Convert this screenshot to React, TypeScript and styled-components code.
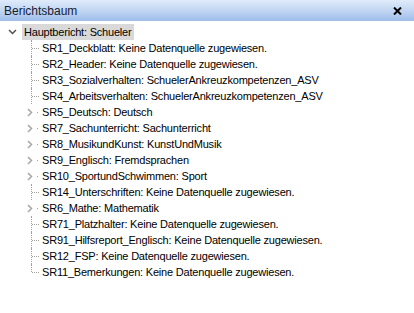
import styled, { createGlobalStyle } from "styled-components";

const GlobalStyle = createGlobalStyle`
  html, body {
    margin: 0;
    padding: 0;
    background: #ffffff;
  }
`;

const Panel = styled.div`
  width: 414px;
  height: 313px;
  display: flex;
  flex-direction: column;
  background: #ffffff;
  font-family: "Liberation Sans", Arial, sans-serif;
  font-size: 11px;
  color: #000000;
  overflow: hidden;
`;

const TitleBar = styled.div`
  height: 21px;
  display: flex;
  align-items: center;
  justify-content: space-between;
  padding: 0 12px 0 4px;
  background: linear-gradient(to bottom, #e0ebfa 0%, #c2d6f3 50%, #9ebde9 100%);
`;

const Title = styled.span`
  font-size: 12px;
  color: #15212f;
`;

const CloseButton = styled.span`
  display: flex;
  align-items: center;
`;

const Tree = styled.div`
  display: flex;
  flex-direction: column;
  padding-top: 3px;
`;

const Row = styled.div`
  height: 16px;
  display: flex;
  align-items: center;
`;

const RootExpander = styled.span`
  width: 20px;
  height: 16px;
  display: flex;
  align-items: center;
  justify-content: center;
  margin-left: 2px;
`;

const Indent = styled.span`
  width: 24px;
  flex: none;
`;

const Connector = styled.span<{ $last?: boolean }>`
  position: relative;
  width: 16px;
  height: 16px;
  flex: none;

  &::before {
    content: "";
    position: absolute;
    left: 7px;
    top: 0;
    height: ${(p) => (p.$last ? "8px" : "16px")};
    border-left: 1px dotted #a0a0a0;
  }

  &::after {
    content: "";
    position: absolute;
    left: 8px;
    top: 8px;
    width: 7px;
    border-top: 1px dotted #a0a0a0;
  }
`;

const ExpanderCell = styled.span`
  position: relative;
  width: 16px;
  height: 16px;
  flex: none;
  display: flex;
  align-items: center;
  padding-left: 3px;
  box-sizing: border-box;

  &::after {
    content: "";
    position: absolute;
    left: 13px;
    top: 8px;
    width: 1px;
    height: 1px;
    background: #a0a0a0;
  }
`;

const Label = styled.span<{ $selected?: boolean }>`
  padding: 0 2px;
  line-height: 16px;
  white-space: nowrap;
  letter-spacing: -0.2px;
  background: ${(p) => (p.$selected ? "#d9d9d9" : "transparent")};
`;

const nodes: { text: string; expandable?: boolean }[] = [
  { text: "SR1_Deckblatt: Keine Datenquelle zugewiesen." },
  { text: "SR2_Header: Keine Datenquelle zugewiesen." },
  { text: "SR3_Sozialverhalten: SchuelerAnkreuzkompetenzen_ASV" },
  { text: "SR4_Arbeitsverhalten: SchuelerAnkreuzkompetenzen_ASV" },
  { text: "SR5_Deutsch: Deutsch", expandable: true },
  { text: "SR7_Sachunterricht: Sachunterricht", expandable: true },
  { text: "SR8_MusikundKunst: KunstUndMusik", expandable: true },
  { text: "SR9_Englisch: Fremdsprachen", expandable: true },
  { text: "SR10_SportundSchwimmen: Sport", expandable: true },
  { text: "SR14_Unterschriften: Keine Datenquelle zugewiesen." },
  { text: "SR6_Mathe: Mathematik", expandable: true },
  { text: "SR71_Platzhalter: Keine Datenquelle zugewiesen." },
  { text: "SR91_Hilfsreport_Englisch: Keine Datenquelle zugewiesen." },
  { text: "SR12_FSP: Keine Datenquelle zugewiesen." },
  { text: "SR11_Bemerkungen: Keine Datenquelle zugewiesen." },
];

function ChevronDown() {
  return (
    <svg width="9" height="6" viewBox="0 0 9 6">
      <path d="M1 1 L4.5 4.5 L8 1" fill="none" stroke="#505050" strokeWidth="1.5" />
    </svg>
  );
}

function ChevronRight() {
  return (
    <svg width="6" height="9" viewBox="0 0 6 9">
      <path d="M1 1 L4.5 4.5 L1 8" fill="none" stroke="#a6a6a6" strokeWidth="1.5" />
    </svg>
  );
}

function CloseIcon() {
  return (
    <svg width="9" height="8" viewBox="0 0 9 8">
      <path d="M1 0.5 L8 7.5 M8 0.5 L1 7.5" stroke="#000" strokeWidth="2" />
    </svg>
  );
}

export default function App() {
  return (
    <>
      <GlobalStyle />
      <Panel>
        <TitleBar>
          <Title>Berichtsbaum</Title>
          <CloseButton>
            <CloseIcon />
          </CloseButton>
        </TitleBar>
        <Tree>
          <Row>
            <RootExpander>
              <ChevronDown />
            </RootExpander>
            <Label $selected>Hauptbericht: Schueler</Label>
          </Row>
          {nodes.map((n, i) => (
            <Row key={n.text}>
              <Indent />
              {n.expandable ? (
                <ExpanderCell>
                  <ChevronRight />
                </ExpanderCell>
              ) : (
                <Connector $last={i === nodes.length - 1} />
              )}
              <Label>{n.text}</Label>
            </Row>
          ))}
        </Tree>
      </Panel>
    </>
  );
}
